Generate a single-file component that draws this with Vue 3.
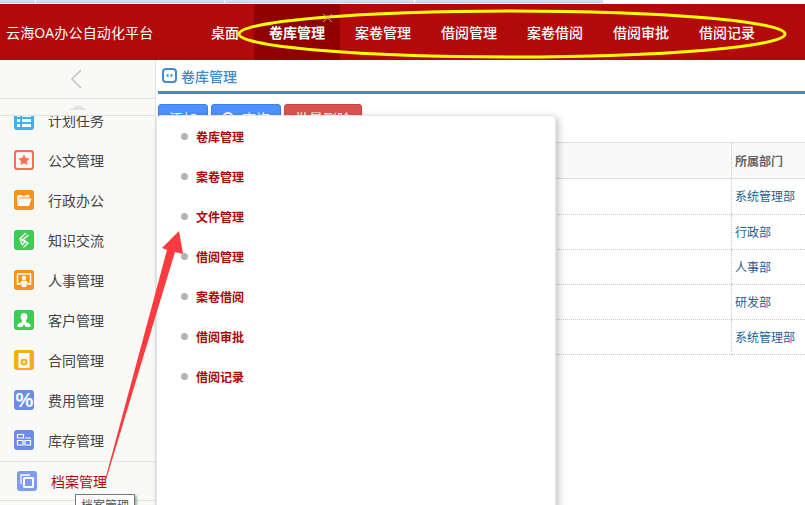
<template>
  <div class="page">
    <div class="tabstrip"><i v-for="w in tabWidths" :key="w.id" class="tab" :style="{ width: w.px + 'px' }"></i></div>
    <header class="topbar">
      <div class="brand">云海OA办公自动化平台</div>
      <nav class="nav">
        <a v-for="item in navItems" :key="item" class="nav-item" :class="{ on: item === '卷库管理' }">{{ item }}</a>
      </nav>
    </header>
    <div class="body">
      <aside class="side">
        <div class="collapse">
          <svg width="12" height="20" viewBox="0 0 12 20"><path d="M11 1 2 10l9 9" fill="none" stroke="#c4c6c6" stroke-width="1.6" /></svg>
        </div>
        <div class="scroll-up"><i class="up"></i></div>
        <div class="menu">
          <div v-for="m in menuItems" :key="m.name" class="menu-item">
            <span class="ico" :style="{ background: m.color }" v-html="m.icon"></span>
            <span>{{ m.name }}</span>
          </div>
        </div>
        <div class="menu-active">
          <span class="ico" style="background: #7d9bf0" v-html="archiveIcon"></span>
          <span>档案管理</span>
        </div>
      </aside>
      <main class="main">
        <div class="title">
          <svg width="15" height="15" viewBox="0 0 15 15"><rect x="1" y="1" width="13" height="13" rx="3" fill="none" stroke="#428bca" stroke-width="2" /><path d="M4 7.500 6.500 5.600v3.800zM11 7.500 8.500 5.600v3.800z" fill="#428bca" /></svg>
          <span>卷库管理</span>
        </div>
        <div class="toolbar">
          <button class="btn blue b1">添加</button>
          <button class="btn blue b2"><i class="search"></i>查询</button>
          <button class="btn red">批量删除</button>
        </div>
        <table class="grid">
          <thead>
            <tr><th></th><th>所属部门</th></tr>
          </thead>
          <tbody>
            <tr v-for="(d, i) in departments" :key="i"><td></td><td>{{ d }}</td></tr>
          </tbody>
        </table>
      </main>
    </div>

    <div class="popup">
      <div v-for="p in popupItems" :key="p" class="popup-item"><i class="dot"></i><span>{{ p }}</span></div>
    </div>
    <div class="tooltip">档案管理</div>

    <svg class="marks" width="805" height="505" viewBox="0 0 805 505">
      <ellipse cx="512" cy="34" rx="273" ry="23" fill="none" stroke="#ffff00" stroke-width="3" />
      <path d="M323 14l9 8M332 14l-9 8" stroke="#c9a09a" stroke-width="1" />
      <path d="M179 231 183 254 175 252 106 480 105 480 167 250 162 248Z" fill="#ff3b3f" />
    </svg>
  </div>
</template>

<script setup>
const navItems = ['桌面', '卷库管理', '案卷管理', '借阅管理', '案卷借阅', '借阅审批', '借阅记录']
const popupItems = ['卷库管理', '案卷管理', '文件管理', '借阅管理', '案卷借阅', '借阅审批', '借阅记录']
const departments = ['系统管理部', '行政部', '人事部', '研发部', '系统管理部']
const tabWidths = [{ id: 1, px: 35 }, { id: 2, px: 188 }, { id: 3, px: 189 }, { id: 4, px: 188 }]

const svg = (body) => `<svg width="20" height="20" viewBox="0 0 20 20">${body}</svg>`

const menuItems = [
  { name: '计划任务', color: '#3fb1f5', icon: svg('<path d="M3 4h3v3H3zM8 4h9v3H8zM3 9h3v3H3zM8 9h9v3H8zM3 14h3v3H3zM8 14h9v3H8z" fill="#fff"/>') },
  { name: '公文管理', color: '#fb6d4f', icon: svg('<rect x="2" y="2" width="16" height="16" rx="1.500" fill="#fdf6f2"/><path d="M10 4.500l1.700 3.500 3.900.5-2.800 2.700.7 3.800L10 13.100l-3.500 1.900.7-3.800-2.800-2.700 3.900-.5z" fill="#fb6d4f"/>') },
  { name: '行政办公', color: '#f9921c', icon: svg('<path d="M3 6.500C3 5.600 3.600 5 4.500 5H8l1 1 6-1.500.5 3H6.500L3 14z" fill="#fff" opacity=".85"/><path d="M6 8.500h11.500L15 16H3z" fill="#fff"/>') },
  { name: '知识交流', color: '#3fcb54', icon: svg('<path d="M12 3 6 8.500l5 3.500-3 3M14.500 5 9 9.500l5 3.500-4.500 4.500M6 8.500 8 15" fill="none" stroke="#fff" stroke-width="1.300"/>') },
  { name: '人事管理', color: '#f9921c', icon: svg('<path d="M3.500 4h13v10h-13z" fill="none" stroke="#fff" stroke-width="1.500"/><circle cx="10" cy="8" r="2.200" fill="#fff"/><path d="M6 13c1-2 2.300-2.500 4-2.500s3 .5 4 2.500zM8.500 13h3l1 4h-5z" fill="#fff"/>') },
  { name: '客户管理', color: '#3fcb54', icon: svg('<path d="M10 3c2.300 0 3.400 1.700 3.400 3.800 0 1.700-.8 3-1.500 3.800v1.200l4.600 2.400V17h-4.500L10 14.500 8 17H3.500v-2.800l4.600-2.400v-1.200c-.7-.8-1.500-2.100-1.500-3.800C6.600 4.700 7.700 3 10 3z" fill="#fff"/>') },
  { name: '合同管理', color: '#f4ae1e', icon: svg('<path d="M4.500 3h11v15h-11z" fill="#fff"/><circle cx="10" cy="12" r="3.500" fill="#f4ae1e"/><circle cx="10" cy="12" r="1.500" fill="#fdebc0"/>') },
  { name: '费用管理', color: '#6b8de9', icon: '<b class="pct">%</b>' },
  { name: '库存管理', color: '#6b8de9', icon: svg('<path d="M3.500 4.500h6v3.500h-6zM3.500 10.500h5.500v4.500H3.500zM11 10.500h5.500v4.500H11z" fill="none" stroke="#fff" stroke-width="1.200"/><path d="M11 7.500h6v1h-6z" fill="#fff"/>') },
]

const archiveIcon = svg('<path d="M4 13V4h9" fill="none" stroke="#fff" stroke-width="1.300"/><rect x="7" y="7" width="9" height="9" rx=".5" fill="none" stroke="#fff" stroke-width="2"/>')
</script>

<style>
body {
  margin: 0;
  background: #fff;
}
</style>

<style scoped>
.page {
  position: relative;
  width: 805px;
  height: 505px;
  overflow: hidden;
  font-family: "Noto Sans CJK SC", "Liberation Sans", sans-serif;
  font-size: 14px;
  color: #444;
}

.tabstrip {
  display: flex;
  gap: 1px;
  height: 4px;
  background: #fff;
}

.tab {
  height: 2px;
  background: #d3e2f0;
  border-bottom: 1px solid #b8cfe4;
}

.topbar {
  display: flex;
  align-items: center;
  height: 56px;
  background: #b20a0a;
  color: #fff;
}

.brand {
  width: 196px;
  padding-left: 6px;
  box-sizing: border-box;
  white-space: nowrap;
  letter-spacing: 0.15px;
  font-family: "Open Sans", "Noto Sans CJK SC", sans-serif;
}

.nav {
  display: flex;
  align-self: stretch;
}

.nav-item {
  display: flex;
  align-items: center;
  padding: 0 15px;
  font-weight: 500;
}

.nav-item.on {
  background: #900000;
  font-weight: 700;
}

.body {
  display: flex;
  height: 445px;
}

.side {
  flex: none;
  width: 156px;
  background: #f9f9f7;
  border-right: 1px solid #e4e4e4;
  box-sizing: border-box;
  display: flex;
  flex-direction: column;
  overflow: hidden;
}

.collapse {
  flex: none;
  height: 39px;
  display: flex;
  align-items: center;
  justify-content: center;
  border-bottom: 1px solid #e3e3e3;
  box-sizing: border-box;
  padding-right: 3px;
}

.scroll-up {
  flex: none;
  height: 17px;
  border-bottom: 1px solid #e3e3e3;
  box-sizing: border-box;
  display: flex;
  justify-content: center;
  padding-top: 6px;
}

.up {
  width: 0;
  height: 0;
  border-left: 9px solid transparent;
  border-right: 9px solid transparent;
  border-bottom: 5px solid #e2e2e2;
}

.menu {
  flex: none;
  height: 346px;
  overflow: hidden;
  border-bottom: 1px solid #e3e3e3;
  box-sizing: border-box;
}

.menu-item {
  display: flex;
  align-items: center;
  gap: 14px;
  height: 40px;
  padding-left: 14px;
  position: relative;
  top: -16px;
}

.ico {
  flex: none;
  width: 20px;
  height: 20px;
  border-radius: 3px;
  display: flex;
  align-items: center;
  justify-content: center;
  overflow: hidden;
}

.ico :deep(.pct) {
  color: #fff;
  font: 700 20px "Liberation Sans", sans-serif;
  letter-spacing: -1px;
}

.menu-active {
  flex: none;
  display: flex;
  align-items: center;
  gap: 14px;
  height: 39px;
  padding-left: 17px;
  color: #b20a0a;
  border-bottom: 1px solid #e3e3e3;
  box-sizing: border-box;
}

.main {
  flex: 1;
  min-width: 0;
  padding-left: 2px;
}

.title {
  display: flex;
  align-items: center;
  gap: 4px;
  height: 31px;
  padding-left: 4px;
  border-bottom: 3px solid #428bca;
  color: #428bca;
  font-weight: 500;
}

.toolbar {
  display: flex;
  gap: 3px;
  margin-top: 10px;
}

.btn {
  height: 28px;
  border: 1px solid #3f80ea;
  border-radius: 3px;
  background: #4d90fe;
  color: #fff;
  font: inherit;
  padding: 0;
  display: flex;
  align-items: center;
  justify-content: center;
  gap: 8px;
}
.b1 { width: 50px; }
.b2 { width: 70px; }
.btn.red {
  width: 78px;
  background: #d9534f;
  border-color: #c9403c;
}

.search {
  width: 8px;
  height: 8px;
  border: 2px solid #fff;
  border-radius: 50%;
}

.grid {
  width: 647px;
  margin-top: 10px;
  border-collapse: collapse;
  table-layout: fixed;
  font-size: 12px;
  color: #1c5f95;
}

.grid th {
  height: 35px;
  padding: 0 3px;
  background: #f9f9f9;
  border-top: 1px solid #ddd;
  border-bottom: 1px solid #ddd;
  color: #666;
  text-align: left;
  font-weight: 700;
}

.grid th:last-child,
.grid td:last-child {
  width: 67px;
  border-left: 1px dotted #c8c8c8;
}

.grid td {
  height: 32px;
  padding: 0 3px 2px;
  border-bottom: 1px dotted #c8c8c8;
}

.grid tbody tr:first-child td {
  height: 33px;
}

.popup {
  position: absolute;
  left: 156px;
  top: 115px;
  width: 400px;
  height: 400px;
  box-sizing: border-box;
  background: #fff;
  border: 1px solid #e6e6e6;
  border-radius: 5px;
  box-shadow: 3px 2px 7px rgba(0, 0, 0, 0.22);
}

.popup-item {
  display: flex;
  align-items: center;
  gap: 8px;
  height: 40px;
  padding-left: 24px;
  color: #ad0808;
  font-size: 12px;
  font-weight: 700;
}

.dot {
  width: 7px;
  height: 7px;
  border-radius: 50%;
  background: #b4b4b4;
}

.tooltip {
  position: absolute;
  left: 75px;
  top: 494px;
  width: 60px;
  height: 20px;
  box-sizing: border-box;
  background: #fff;
  border: 1px solid #767676;
  font-size: 12px;
  line-height: 20px;
  text-align: center;
  color: #555;
  box-shadow: 2px 2px 2px rgba(0, 0, 0, 0.3);
}

.marks {
  position: absolute;
  left: 0;
  top: 0;
  pointer-events: none;
}
</style>
